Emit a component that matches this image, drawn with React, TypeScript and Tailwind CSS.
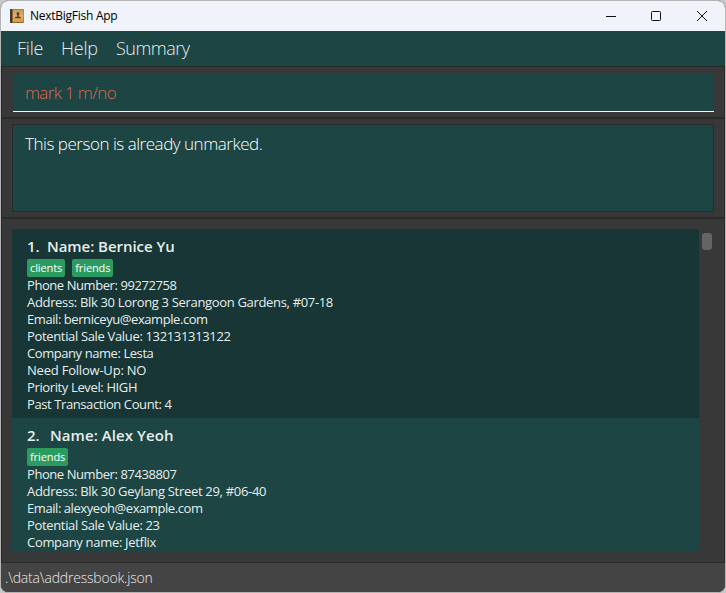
type Field = { text: string; tracking: string };
type Person = { id: number; name: string; nameClass: string; tags: string[]; fields: Field[] };

const people: Person[] = [
  {
    id: 1,
    name: "Name: Bernice Yu",
    nameClass: "ml-[10px] tracking-[-0.05px]",
    tags: ["clients", "friends"],
    fields: [
      { text: "Phone Number: 99272758", tracking: "tracking-[-0.43px]" },
      { text: "Address: Blk 30 Lorong 3 Serangoon Gardens, #07-18", tracking: "tracking-[-0.33px]" },
      { text: "Email: berniceyu@example.com", tracking: "tracking-[-0.43px]" },
      { text: "Potential Sale Value: 132131313122", tracking: "tracking-[-0.34px]" },
      { text: "Company name: Lesta", tracking: "tracking-[-0.43px]" },
      { text: "Need Follow-Up: NO", tracking: "tracking-[-0.21px]" },
      { text: "Priority Level: HIGH", tracking: "tracking-[-0.37px]" },
      { text: "Past Transaction Count: 4", tracking: "tracking-[-0.4px]" },
    ],
  },
  {
    id: 2,
    name: "Name: Alex Yeoh",
    nameClass: "ml-[13px] tracking-[0.07px]",
    tags: ["friends"],
    fields: [
      { text: "Phone Number: 87438807", tracking: "tracking-[-0.43px]" },
      { text: "Address: Blk 30 Geylang Street 29, #06-40", tracking: "tracking-[-0.31px]" },
      { text: "Email: alexyeoh@example.com", tracking: "tracking-[-0.43px]" },
      { text: "Potential Sale Value: 23", tracking: "tracking-[-0.34px]" },
      { text: "Company name: Jetflix", tracking: "tracking-[-0.31px]" },
    ],
  },
];

function PersonCard({ person, className }: { person: Person; className: string }) {
  return (
    <section className={`shrink-0 pl-[15px] pt-[6px] text-[#e6eeed] ${className}`}>
      <h2 className="flex h-[22px] text-[15px] font-semibold leading-[22px]">
        <span className="w-[10px]">{person.id}.</span>
        <span className={person.nameClass}>{person.name}</span>
      </h2>
      <div className="mt-[2px] flex h-[18px] gap-[7px]">
        {person.tags.map((tag) => (
          <span key={tag} className="rounded-[2px] bg-[#2b9b60] px-[3px] text-[11px] leading-[18px] tracking-[-0.1px] text-white">
            {tag}
          </span>
        ))}
      </div>
      {person.fields.map((f) => (
        <p key={f.text} className={`h-[17px] whitespace-nowrap text-[13px] leading-[17px] ${f.tracking}`}>
          {f.text}
        </p>
      ))}
    </section>
  );
}

function BookIcon() {
  return (
    <svg width="14" height="14" viewBox="0 0 14 14">
      <defs>
        <linearGradient id="cover" x1="0" y1="0" x2="0" y2="1">
          <stop offset="0" stopColor="#c99a50" />
          <stop offset="0.5" stopColor="#e2b163" />
          <stop offset="1" stopColor="#d79b3f" />
        </linearGradient>
      </defs>
      <rect width="14" height="14" rx="1" fill="#8b672f" />
      <rect width="2" height="14" fill="#3e3935" />
      <rect x="3" y="0.5" width="10.5" height="12.5" fill="url(#cover)" />
      <ellipse cx="8" cy="4.8" rx="1.5" ry="1.8" fill="#514332" />
      <path d="M7.3 6h1.4v1.5c1.5.2 2.5.6 2.5 1.8H4.8c0-1.2 1-1.6 2.5-1.8z" fill="#514332" />
    </svg>
  );
}

export default function App() {
  return (
    <div className="h-[593px] w-[726px] overflow-hidden bg-[#c9c9c9] font-['Open_Sans','Noto_Sans',sans-serif]">
      <div className="flex h-[593px] flex-col overflow-hidden rounded-[8px] border border-[#b4b4b4] bg-[#383838]">
        <header className="flex h-[30px] shrink-0 items-center bg-[#f0f3fa] pl-[9px]">
          <BookIcon />
          <h1 className="ml-[6px] flex-1 text-[12px] tracking-[-0.26px] text-black">NextBigFish App</h1>
          <svg width="102" height="12" viewBox="0 0 102 12" className="mr-[17px]" fill="none" stroke="#111">
            <path d="M0 6.5h10" />
            <rect x="45.5" y="1.5" width="9" height="9" rx="1" />
            <path d="M91 1l10 10M101 1L91 11" />
          </svg>
        </header>
        <nav className="flex h-[35px] shrink-0 bg-[#1d4543] pl-[16px] text-[18px] font-light leading-[35px] text-[#e4ecec]">
          <span className="w-[44px] tracking-[-0.2px]">File</span>
          <span className="w-[55px] tracking-[-0.2px]">Help</span>
          <span className="tracking-[-0.5px]">Summary</span>
        </nav>
        <main className="flex h-[497px] shrink-0 flex-col border border-[#292929]">
          <div className="h-[51px] border-b border-[#2a2a2a] pl-[11px] pr-[10px] pt-[6px]">
            <div className="h-[39px] border-b border-white bg-[#1d4543] pl-[12px] text-[17px] font-light leading-[39px] tracking-[-0.65px] text-[#d96a54]">
              mark 1 m/no
            </div>
          </div>
          <div className="h-[100px] border-y border-[#2a2a2a] px-[10px] pt-[5px]">
            <div className="h-[88px] border border-[#2a2a2a] bg-[#1d4543] pl-[12px] pt-[7px] text-[17px] font-light leading-6 tracking-[-0.47px] text-white">
              This person is already unmarked.
            </div>
          </div>
          <div className="flex h-[344px] border-t border-[#2a2a2a] pl-[10px] pt-[10px]">
            <div className="flex h-[322px] w-[687px] flex-col overflow-hidden">
              <PersonCard person={people[0]} className="h-[189px] bg-[#173635]" />
              <PersonCard person={people[1]} className="h-[134px] bg-[#1d4543]" />
            </div>
            <div className="ml-[3px] mt-[4px] h-[17px] w-[10px] rounded-[3px] bg-[#646464]" />
          </div>
        </main>
        <footer className="flex-1 bg-[#444444] pl-[4px] text-[14px] font-light leading-[30px] tracking-[-0.19px] text-[#e8e8e8]">
          .\data\addressbook.json
        </footer>
      </div>
    </div>
  );
}
